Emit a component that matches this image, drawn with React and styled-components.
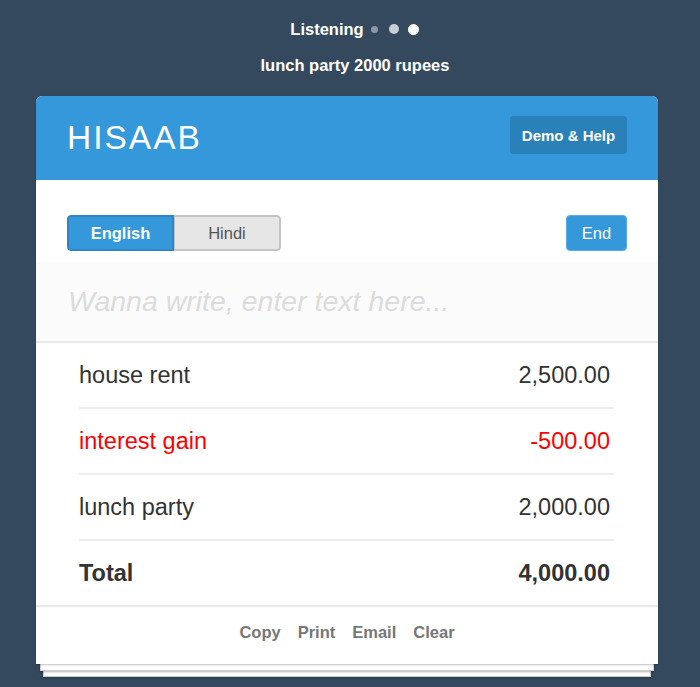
import styled, { createGlobalStyle } from 'styled-components'

const GlobalStyle = createGlobalStyle`
  html, body {
    margin: 0;
    padding: 0;
    background: #34495e;
    font-family: "Liberation Sans", Arial, sans-serif;
  }
`

const Page = styled.div`
  width: 700px;
  min-height: 687px;
  background: #34495e;
  display: flex;
  flex-direction: column;
  align-items: center;
  padding-top: 17px;
  box-sizing: border-box;
`

const Status = styled.div`
  display: flex;
  align-items: center;
  height: 24px;
  color: #fff;
  font-weight: bold;
  font-size: 16.5px;
  margin-left: 9px;
`

const Dot = styled.span`
  display: inline-block;
  width: ${p => p.size}px;
  height: ${p => p.size}px;
  border-radius: 50%;
  background: ${p => p.color};
  margin-left: ${p => p.gap}px;
`

const Heard = styled.div`
  color: #fff;
  font-weight: bold;
  font-size: 16.5px;
  margin-top: 15px;
  margin-left: 10px;
  height: 20px;
`

const Stack = styled.div`
  position: relative;
  width: 622px;
  margin-top: 20px;
  margin-right: 6px;

  &::before, &::after {
    content: '';
    position: absolute;
    background: #fff;
    border: 1px solid #d0d0d0;
    border-top: none;
    box-shadow: 0 1px 2px rgba(0,0,0,0.3);
  }
  &::before {
    left: 4px;
    right: 4px;
    bottom: -7px;
    height: 8px;
    z-index: 1;
  }
  &::after {
    left: 7px;
    right: 7px;
    bottom: -13px;
    height: 8px;
    z-index: 0;
  }
`

const Card = styled.div`
  position: relative;
  z-index: 2;
  background: #fff;
  border-radius: 6px 6px 0 0;
  overflow: hidden;
  box-shadow: 0 1px 2px rgba(0,0,0,0.25);
`

const Header = styled.div`
  height: 84px;
  background: #3498db;
  display: flex;
  align-items: center;
  justify-content: space-between;
  padding: 0 31px 0 31px;
`

const Logo = styled.div`
  color: #fff;
  font-size: 33.5px;
  letter-spacing: 2px;
  font-family: "Liberation Sans", Arial, sans-serif;
`

const HelpButton = styled.button`
  background: #2a80b9;
  color: #fff;
  border: none;
  border-radius: 3px;
  height: 38px;
  width: 117px;
  font-family: "Liberation Sans", Arial, sans-serif;
  font-weight: bold;
  font-size: 15px;
  margin-bottom: 6px;
`

const Controls = styled.div`
  display: flex;
  justify-content: space-between;
  align-items: center;
  padding: 35px 31px 11px 31px;
`

const Toggle = styled.div`
  display: flex;
  border-radius: 4px;
  overflow: hidden;
`

const ToggleItem = styled.button`
  width: 107px;
  height: 36px;
  font-family: "Liberation Sans", Arial, sans-serif;
  font-size: 16.5px;
  border: 2px solid ${p => (p.active ? '#2e86c6' : '#c4c4c4')};
  background: ${p => (p.active ? '#3498db' : '#e6e6e6')};
  color: ${p => (p.active ? '#fff' : '#555')};
  font-weight: ${p => (p.active ? 'bold' : 'normal')};
  border-radius: ${p => (p.active ? '4px 0 0 4px' : '0 4px 4px 0')};
  ${p => !p.active && 'border-left: 1px solid #c4c4c4;'}
`

const EndButton = styled.button`
  width: 61px;
  height: 36px;
  background: #3498db;
  color: #fff;
  border: 1px solid #5aacea;
  border-radius: 4px;
  font-family: "Liberation Sans", Arial, sans-serif;
  font-size: 16.5px;
`

const EntryInput = styled.input`
  display: block;
  width: 100%;
  box-sizing: border-box;
  height: 81px;
  border: none;
  border-bottom: 2px solid #e8e8e8;
  background: #fbfbfb;
  padding: 0 32px;
  font-family: "Liberation Sans", Arial, sans-serif;
  font-size: 28.5px;
  font-style: italic;
  outline: none;

  &::placeholder {
    color: #dcdcdc;
  }
`

const List = styled.div`
  padding: 0 44px 0 43px;
`

const Row = styled.div`
  display: flex;
  justify-content: space-between;
  align-items: center;
  height: 64px;
  padding: 0 4px 0 0;
  border-bottom: ${p => (p.last ? 'none' : '2px solid #eeeeee')};
  font-size: 23.5px;
  font-weight: ${p => (p.total ? 'bold' : 'normal')};
  color: ${p => (p.negative ? '#ff0000' : '#333')};
`

const Footer = styled.div`
  border-top: 2px solid #e8e8e8;
  height: 51px;
  padding-bottom: 6px;
  display: flex;
  justify-content: center;
  align-items: center;
  gap: 17px;
`

const FooterLink = styled.span`
  color: #777;
  font-weight: bold;
  font-size: 16.5px;
`

const items = [
  { name: 'house rent', amount: '2,500.00' },
  { name: 'interest gain', amount: '-500.00', negative: true },
  { name: 'lunch party', amount: '2,000.00' },
]

const App = () => {
  return (
    <Page>
      <GlobalStyle />
      <Status>
        Listening
        <Dot size={7} color="#8b98a6" gap={7} />
        <Dot size={10} color="#c9ced4" gap={11} />
        <Dot size={11} color="#fff" gap={9} />
      </Status>
      <Heard>lunch party 2000 rupees</Heard>
      <Stack>
        <Card>
          <Header>
            <Logo>HISAAB</Logo>
            <HelpButton>Demo &amp; Help</HelpButton>
          </Header>
          <Controls>
            <Toggle>
              <ToggleItem active>English</ToggleItem>
              <ToggleItem>Hindi</ToggleItem>
            </Toggle>
            <EndButton>End</EndButton>
          </Controls>
          <EntryInput placeholder="Wanna write, enter text here..." />
          <List>
            {items.map(it => (
              <Row key={it.name} negative={it.negative}>
                <span>{it.name}</span>
                <span>{it.amount}</span>
              </Row>
            ))}
            <Row total last>
              <span>Total</span>
              <span>4,000.00</span>
            </Row>
          </List>
          <Footer>
            <FooterLink>Copy</FooterLink>
            <FooterLink>Print</FooterLink>
            <FooterLink>Email</FooterLink>
            <FooterLink>Clear</FooterLink>
          </Footer>
        </Card>
      </Stack>
    </Page>
  )
}

export default App
